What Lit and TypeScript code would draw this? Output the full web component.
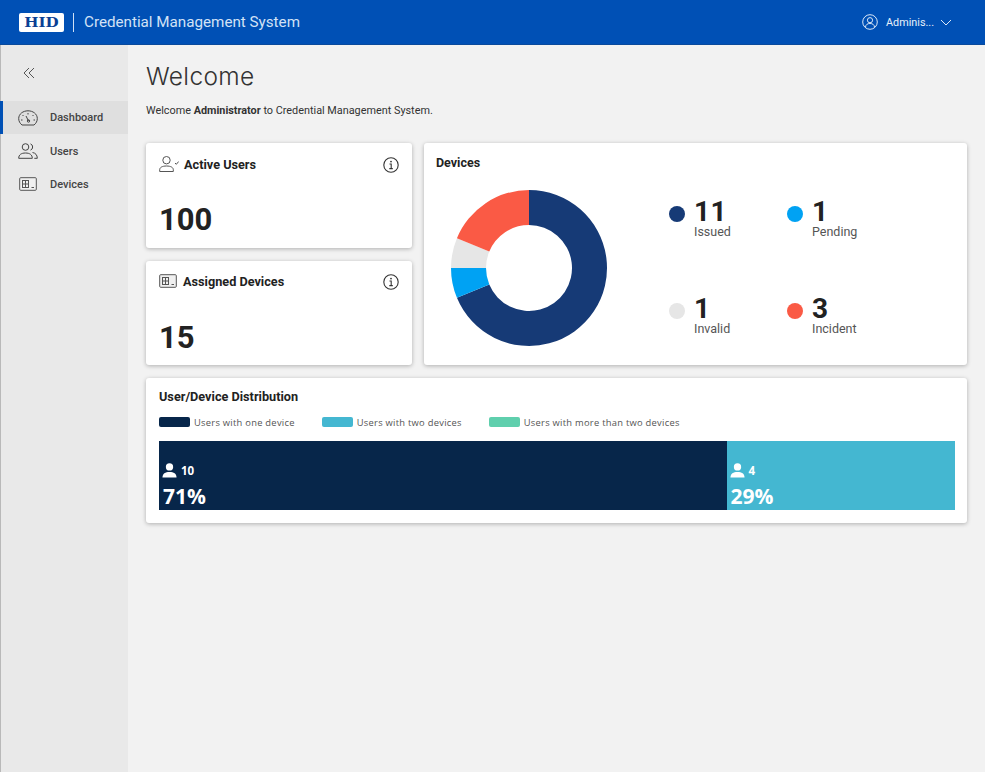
import { LitElement, html, css, svg } from "lit";
import { customElement } from "lit/decorators.js";

const userIcon = html`<svg class="bar-user" viewBox="0 0 16 16" width="15" height="15"><circle cx="8" cy="4.200" r="3.900" fill="#fff"/><path d="M.5 15.500c0-4.200 3-6 7.500-6s7.500 1.800 7.500 6z" fill="#fff"/></svg>`;

const deviceIcon = (w: number, h: number) => html`<svg viewBox="0 0 18 14" width=${w} height=${h} fill="none" stroke="#555" stroke-width="1"><rect x="0.700" y="0.700" width="16.600" height="12.600" rx="1" fill="#f0f0f0"/><rect x="3.500" y="3.500" width="6" height="7"/><path d="M3.500 7h6M6.500 3.500v7M12.500 10.500h2.500"/></svg>`;

const infoIcon = html`<svg class="info" viewBox="0 0 16 16" width="16" height="16" fill="none" stroke="#333" stroke-width="1.100"><circle cx="8" cy="8" r="7.200"/><circle cx="8" cy="4.600" r="0.900" fill="#333" stroke="none"/><path d="M6.500 7h1.700v4.500M6.300 11.600h3.500"/></svg>`;

const segments = [
  { value: 11, color: "#163a76" },
  { value: 1, color: "#00a2f3" },
  { value: 1, color: "#e6e6e6" },
  { value: 3, color: "#fa5a45" },
];

function donut() {
  const total = segments.reduce((s, x) => s + x.value, 0);
  const R = 78;
  const r = 43;
  let angle = 0;
  const pt = (rad: number, a: number) => {
    const t = ((a - 90) * Math.PI) / 180;
    return `${80 + rad * Math.cos(t)} ${80 + rad * Math.sin(t)}`;
  };
  return segments.map((s) => {
    const start = angle;
    angle += (s.value / total) * 360;
    const large = angle - start > 180 ? 1 : 0;
    const d = `M${pt(R, start)}A${R} ${R} 0 ${large} 1 ${pt(R, angle)}L${pt(r, angle)}A${r} ${r} 0 ${large} 0 ${pt(r, start)}Z`;
    return svg`<path d=${d} fill=${s.color}/>`;
  });
}

@customElement("app-root")
export class AppRoot extends LitElement {
  static styles = css`
    :host {
      display: block;
      height: 772px;
      overflow: hidden;
      font-family: Roboto, sans-serif;
      color: #222;
      background: #f2f2f2;
    }
    .header {
      height: 45px;
      background: #0050b5;
      display: flex;
      align-items: center;
      color: #fff;
      padding-left: 19px;
      box-sizing: border-box;
      border-bottom: 1px solid #0a4a9c;
    }
    .logo {
      width: 45px;
      height: 19px;
      background: #fff;
      border-radius: 2px;
      display: flex;
      align-items: center;
      justify-content: center;
    }
    .logo span {
      color: #0a3f94;
      font-family: "DejaVu Serif", serif;
      font-weight: 700;
      font-size: 13.500px;
      line-height: 19px;
      transform: scaleX(1.120);
    }
    .divider {
      width: 1px;
      height: 19px;
      background: #cfe0f5;
      margin: 0 10px 0 9px;
    }
    .title {
      font-size: 15.200px;
      color: #d3e2f6;
    }
    .account {
      margin-left: auto;
      display: flex;
      align-items: center;
      font-size: 10.800px;
      padding-right: 33px;
      color: #e8f0fb;
    }
    .account svg:first-child {
      margin-right: 8px;
    }
    .account svg:last-child {
      margin-left: 6px;
    }
    .body {
      display: flex;
      height: 727px;
    }
    .side {
      width: 128px;
      flex: none;
      box-sizing: border-box;
      background: #e9e9e9;
      border-left: 1px solid #b9b9b9;
      padding-top: 22px;
    }
    .collapse {
      height: 34px;
      padding-left: 22px;
      display: flex;
      align-items: flex-start;
    }
    .nav {
      display: flex;
      align-items: center;
      height: 33.400px;
      padding-left: 15px;
      gap: 12px;
      font-size: 11px;
      font-weight: 500;
      color: #444;
      border-left: 3px solid transparent;
      margin-left: -1px;
      box-sizing: border-box;
    }
    .nav svg {
      width: 20px;
    }
    .nav.active {
      background: #dfdfdf;
      border-left-color: #0050b5;
    }
    .main {
      flex: 1;
      padding: 17px 18px 0 18px;
      min-width: 0;
    }
    h1 {
      margin: 0;
      font-family: Inter, sans-serif;
      font-weight: 300;
      font-size: 24.500px;
      letter-spacing: 0.350px;
      line-height: 28px;
      color: #333;
    }
    .intro {
      margin: 14px 0 25px;
      font-size: 10.850px;
      line-height: 14px;
      color: #333;
    }
    .intro b {
      font-weight: 700;
    }
    .grid {
      display: grid;
      grid-template-columns: 266px 1fr;
      grid-template-rows: 105px 104px;
      gap: 13px 12px;
    }
    .card {
      background: #fff;
      border-radius: 3px;
      box-shadow: 0 1px 4px rgba(0, 0, 0, 0.28);
      box-sizing: border-box;
    }
    .stat {
      padding: 11px 13px 12px;
      display: flex;
      flex-direction: column;
      justify-content: space-between;
    }
    .stat.second {
      padding-top: 10px;
      padding-bottom: 11px;
    }
    .stat-head {
      display: flex;
      align-items: center;
      gap: 5px;
      font-size: 12.700px;
      font-weight: 700;
      height: 20px;
    }
    .stat-head .info {
      margin-left: auto;
      margin-top: 2px;
    }
    .stat-num {
      font-size: 31px;
      font-weight: 700;
      line-height: 36px;
      margin-bottom: -2px;
    }
    .devices {
      grid-row: 1 / 3;
      grid-column: 2;
      padding: 13px 12px;
    }
    .card-title {
      font-size: 12.500px;
      font-weight: 700;
      line-height: 14px;
    }
    .dev-body {
      display: flex;
      margin-top: 18px;
    }
    .dev-body > svg {
      margin-left: 13px;
      flex: none;
    }
    .legend {
      display: grid;
      grid-template-columns: 118px 100px;
      grid-auto-rows: 97px;
      margin: 6px 0 0 60px;
    }
    .item {
      display: flex;
      gap: 9px;
    }
    .dot {
      width: 16px;
      height: 16px;
      border-radius: 50%;
      margin-top: 12px;
      flex: none;
    }
    .num {
      font-size: 28px;
      font-weight: 700;
      line-height: 25px;
      height: 25px;
      padding-top: 5px;
      letter-spacing: 0.500px;
    }
    .lbl {
      font-size: 12.500px;
      color: #555;
      line-height: 14px;
      margin-top: 1px;
    }
    .dist {
      margin-top: 13px;
      height: 145px;
      padding: 11px 12px 0 13px;
    }
    .dist .card-title {
      font-size: 12.700px;
      line-height: 15px;
    }
    .dist-legend {
      display: flex;
      gap: 27px;
      margin-top: 12px;
      font-family: "Open Sans", sans-serif;
      font-size: 9.350px;
      letter-spacing: 0.270px;
      color: #555;
      height: 12px;
      align-items: center;
    }
    .dist-legend span {
      display: flex;
      align-items: center;
      gap: 4px;
    }
    .dist-legend i {
      width: 31px;
      height: 10px;
      border-radius: 2px;
    }
    .bar {
      display: flex;
      height: 69px;
      margin-top: 13px;
    }
    .seg {
      box-sizing: border-box;
      color: #fff;
      font-family: "Open Sans", sans-serif;
      font-weight: 700;
      padding: 21px 0 0 3px;
    }
    .seg .cnt {
      display: flex;
      align-items: center;
      gap: 4px;
      font-size: 11.500px;
      height: 16px;
    }
    .seg .pct {
      font-size: 21px;
      line-height: 27px;
      margin: 5px 0 0 1px;
    }
  `;

  render() {
    return html`
      <div class="header">
        <div class="logo"><span>HID</span></div>
        <div class="divider"></div>
        <div class="title">Credential Management System</div>
        <div class="account">
          <svg viewBox="0 0 16 16" width="16" height="16" fill="none" stroke="#dbe8f8" stroke-width="1"><circle cx="8" cy="8" r="7.300"/><circle cx="8" cy="6.200" r="2.600"/><path d="M3.500 13c.3-2.500 2-3.500 4.500-3.500s4.200 1 4.500 3.500"/></svg>
          Adminis...
          <svg viewBox="0 0 12 7" width="12" height="7" fill="none" stroke="#dbe8f8" stroke-width="1"><path d="M1 1l5 5 5-5"/></svg>
        </div>
      </div>
      <div class="body">
        <div class="side">
          <div class="collapse">
            <svg viewBox="0 0 12 12" width="12" height="12" fill="none" stroke="#555" stroke-width="1"><path d="M6 1L1 6l5 5M11 1L6 6l5 5"/></svg>
          </div>
          <div class="nav active">
            <svg viewBox="0 0 20 16" height="16" fill="none" stroke="#444" stroke-width="1"><path d="M4 15h12c2-1.500 3.300-3.800 3.300-6.500C19.300 4 15 .8 10 .8S.7 4 .7 8.500C.7 11.200 2 13.500 4 15z"/><path d="M10 3v1.500M4.500 5l1 1M15.500 5l-1 1M3 10h1.500M15.500 10H17M8 6l2.500 5"/><circle cx="10.500" cy="11" r="1.200"/></svg>
            Dashboard
          </div>
          <div class="nav">
            <svg viewBox="0 0 20 16" height="16" fill="none" stroke="#444" stroke-width="1"><circle cx="7.500" cy="4" r="3.300"/><path d="M.7 15.300c0-3.500 2.500-5.300 6.800-5.300s6.800 1.800 6.800 5.300zM12.500 .9a3.300 3.300 0 0 1 0 6.200M14.500 9.500c3 .5 4.800 2.500 4.800 5.800h-3"/></svg>
            Users
          </div>
          <div class="nav">${deviceIcon(20, 14)} Devices</div>
        </div>
        <div class="main">
          <h1>Welcome</h1>
          <p class="intro">Welcome <b>Administrator</b> to Credential Management System.</p>
          <div class="grid">
            <div class="card stat">
              <div class="stat-head">
                <svg viewBox="0 0 20 16" width="20" height="16" fill="none" stroke="#555" stroke-width="1"><circle cx="7.500" cy="4.200" r="3.700"/><path d="M.7 15.500v-1.800c0-2.200 2.400-3.700 6.800-3.700s6.800 1.500 6.800 3.700v1.800z"/><path d="M16 7l1.300 1.300L19.700 5.500"/></svg>
                Active Users ${infoIcon}
              </div>
              <div class="stat-num">100</div>
            </div>
            <div class="card devices">
              <div class="card-title">Devices</div>
              <div class="dev-body">
                <svg viewBox="0 0 160 160" width="160" height="160">${donut()}</svg>
                <div class="legend">
                  ${[
                    ["11", "Issued", "#163a76"],
                    ["1", "Pending", "#00a2f3"],
                    ["1", "Invalid", "#e6e6e6"],
                    ["3", "Incident", "#fa5a45"],
                  ].map(
                    ([n, l, c]) => html`<div class="item">
                      <div class="dot" style="background:${c}"></div>
                      <div><div class="num">${n}</div><div class="lbl">${l}</div></div>
                    </div>`
                  )}
                </div>
              </div>
            </div>
            <div class="card stat second">
              <div class="stat-head">
                ${deviceIcon(18, 14)}
                <span style="margin-left:1px">Assigned Devices</span> ${infoIcon}
              </div>
              <div class="stat-num">15</div>
            </div>
          </div>
          <div class="card dist">
            <div class="card-title">User/Device Distribution</div>
            <div class="dist-legend">
              <span><i style="background:#07264a"></i>Users with one device</span>
              <span><i style="background:#44b7d1"></i>Users with two devices</span>
              <span><i style="background:#5fcfad"></i>Users with more than two devices</span>
            </div>
            <div class="bar">
              <div class="seg" style="width:71.300%;background:#07264a">
                <div class="cnt">${userIcon} 10</div>
                <div class="pct">71%</div>
              </div>
              <div class="seg" style="width:28.700%;background:#44b7d1">
                <div class="cnt">${userIcon} 4</div>
                <div class="pct">29%</div>
              </div>
            </div>
          </div>
        </div>
      </div>
    `;
  }
}
